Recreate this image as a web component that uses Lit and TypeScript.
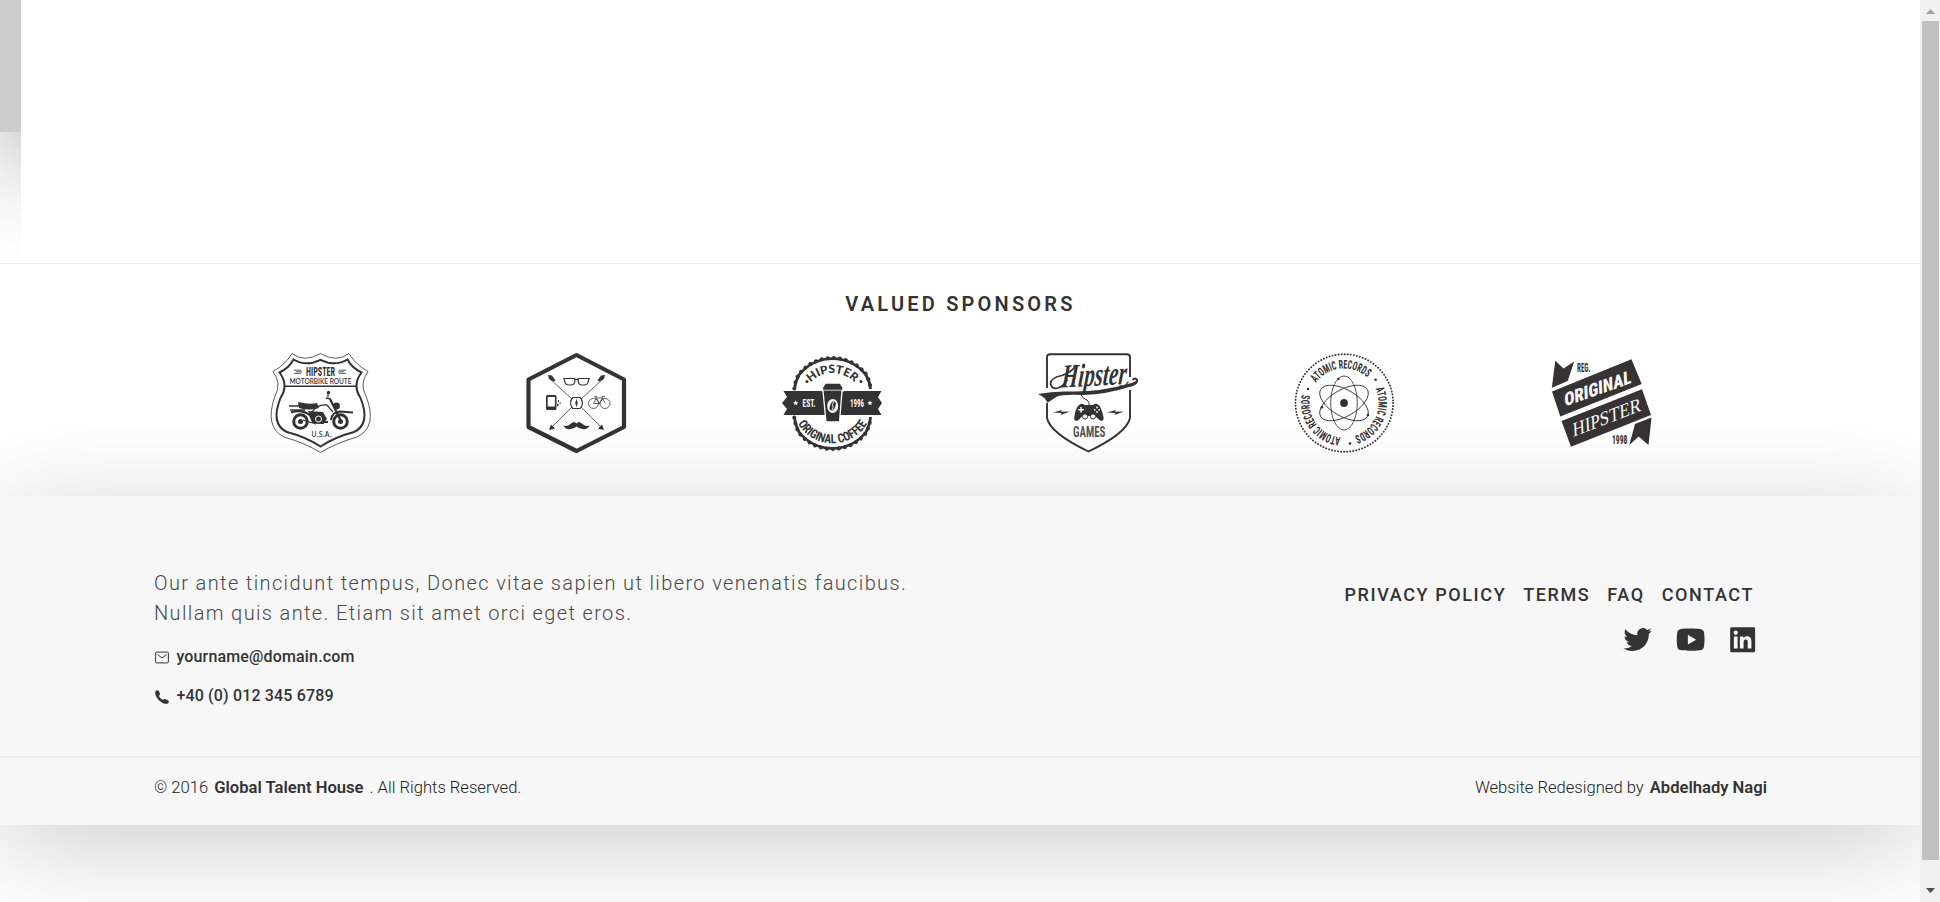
import { LitElement, html, css, svg } from "lit";
import { customElement } from "lit/decorators.js";

const INK = "#333333";

const motorbike = svg`
  <g fill="none" stroke=${INK}>
    <path stroke-width=".8" d="M22 .5Q34 10 50.500 .6Q67 10 79 .5Q86 12 98 18.500Q89 31 96 43Q108 74 87 84Q66 90 50.500 99.500Q35 90 14 84Q-6 74 5 43Q12 31 3 18.500Q15 12 22 .5Z"/>
    <path stroke-width="2" d="M23.500 6.500Q36 14 50.500 6.800Q65 14 77.500 6.500Q82 15 91.500 19.500Q82 32 90.500 45Q101 71 84 79Q65 84 50.500 93.500Q36 84 17 79Q0 71 10.500 45Q19 32 9.500 19.500Q19 15 23.500 6.500Z"/>
    <path stroke-width="1.600" d="M14.500 33.300H86.500"/>
    <path stroke-width=".8" d="M24 17.200h7M26 18.800h6M24 20.400h7M69 17.200h7M68 18.800h6M69 20.400h7"/>
    <circle cx="30.500" cy="68.500" r="6.800" stroke-width="3"/>
    <circle cx="70.500" cy="68.500" r="6.800" stroke-width="3"/>
    <path stroke-width="2.200" d="M21 59.500Q31 56 40 62L43 69H58M61 67Q62 59 70 58.500L83 59.500M60 46L71 68"/>
    <path stroke-width="1.300" d="M56 45l5 1M58 40v4M42 59Q47 51 57 52l6 7M19 53h10M20 57h15M46 70l8 0M33 67l13 4"/>
  </g>
  <g fill=${INK}>
    <path d="M28 49q12 3 19 1l2 5q-10 3-20 0zM38 58l15 1 4 7-4 5-9-1z"/>
    <circle cx="66.500" cy="53" r="3.400"/><circle cx="58.500" cy="39.500" r="1.700"/>
    <circle cx="30.500" cy="68.500" r="2.500"/><circle cx="70.500" cy="68.500" r="2.500"/>
  </g>
  <circle cx="48.500" cy="66" r="3" fill="none" stroke="#fff"/>
  <text class="cond" x="36" y="22.800" font-size="12.500" textLength="29" lengthAdjust="spacingAndGlyphs">HIPSTER</text>
  <text class="geo" x="19.500" y="30.600" font-size="7" textLength="62" lengthAdjust="spacingAndGlyphs">MOTORBIKE ROUTE</text>
  <text class="geo" x="41.500" y="83.600" font-size="6.800" textLength="20" lengthAdjust="spacing">U.S.A.</text>`;

const hexagon = svg`
  <path d="M50.500 2L98 26.500V74L50.500 98L2.500 74V26.500Z" fill="none" stroke=${INK} stroke-width="4.200" stroke-linejoin="round"/>
  <g fill="none" stroke=${INK} stroke-width=".75">
    <path d="M24 26L46 46M55 54L77 76M77 26L55 46M46 54L24 76"/>
    <path stroke-width="1.100" d="M47 44.500h7q2.500 2.500 2.500 5.500t-2.500 5.500h-7q-2.500-2.500-2.500-5.500t2.500-5.500z"/>
    <path stroke-width="1.200" d="M38 25.500h10.800v3q-.5 3.500-4 3.500h-2q-3.500 0-4-3.500zM63 25.500H52.200v3q.5 3.500 4 3.500h2q3.500 0 4-3.500zM48.800 26.500h3.500"/>
    <circle cx="67.500" cy="50.500" r="5"/><circle cx="79" cy="50.500" r="5"/>
    <path d="M67.500 50.500l3-5.500h6l-3 5.500zM79 50.500l-3-7h3M70.500 45l-1-1.500M68 43.700h3M70.500 45l3 5.500"/>
  </g>
  <path fill=${INK} d="M22 22l4 .5 3.500 5-1.500 1-5-2.500zM79 22l-4 .5-3.500 5 1.500 1 5-2.500zM23 77l2-5.500 4 4zM78 77l-2-5.500-4 4z"/>
  <path fill=${INK} d="M50.500 45.800l1.300 4.200-1.300 4.200-1.300-4.200z"/>
  <path fill=${INK} fill-rule="evenodd" d="M21.500 42h7.500q1.500 0 1.500 1.500v12q0 1.500-1.500 1.500h-7.500q-1.500 0-1.500-1.500v-12q0-1.500 1.500-1.500zM21.700 44v9.500h7.200V44z"/>
  <path fill=${INK} d="M32 47h1v2h-1zM31 51h1.600v2H31zM33.500 49.500h1.500v1h-1.500z"/>
  <path fill=${INK} d="M37.500 72.500Q42 74 45 70.500Q48.500 67.500 50.500 70.500Q52.500 67.500 56 70.500Q59 74 63.500 72.500Q61.500 77 56.500 76Q52 75 50.500 73.500Q49 75 44.500 76Q39.500 77 37.500 72.500Z"/>`;

const STAR = "M0-2.700L.8-.9L2.600-.8L1.200.4L1.600 2.200L0 1.200L-1.600 2.200L-1.200.4L-2.600-.8L-.8-.9Z";

const coffee = svg`
  <defs>
    <path id="ca" d="M20.500 50A30 30 0 0 1 80.500 50"/>
    <path id="cb" d="M10.200 50A40.300 40.300 0 0 0 90.800 50"/>
  </defs>
  <g fill="none" stroke=${INK}>
    <path stroke-width="2.800" d="M12.500 36Q13 29 17 22A42.500 42.500 0 0 1 84 22Q88 29 88.500 36M12.500 64Q13 71 17 79A42.500 42.500 0 0 0 84 79Q88 71 88.500 64"/>
    <path stroke-width="4" stroke-linecap="round" stroke-dasharray=".1 6" d="M12.300 35.500Q13 29 16.600 21.600A42.800 42.800 0 0 1 84.400 21.600Q88 29 88.700 35.500M12.300 64.500Q13 71 16.600 79.400A42.800 42.800 0 0 0 84.400 79.400Q88 71 88.700 64.500"/>
  </g>
  <path fill=${INK} d="M1.500 38H99.500L96 44L100 50L96 56L99.500 62H1.500L5 56L0 50L5 44Z"/>
  <path fill=${INK} stroke="#fcfcfc" stroke-width="1.300" d="M43.500 30H58L61 34.500V38H60L57.500 69H44L41 38H40.500V34.500Z"/>
  <path stroke="#fcfcfc" stroke-width=".8" d="M41 37.200H60.500"/>
  <ellipse cx="50.700" cy="53" rx="5.500" ry="7" fill="#fcfcfc"/>
  <ellipse cx="50.700" cy="53" rx="2.600" ry="4.900" fill=${INK} transform="rotate(22 50.700 53)"/>
  <path d="M51.800 48.500q-2 3.500-1 4.500t-1 4.500" fill="none" stroke="#fcfcfc" stroke-width=".9"/>
  <text class="cond light" x="20.500" y="53.500" font-size="10.500" textLength="13" lengthAdjust="spacingAndGlyphs">EST.</text>
  <text class="cond light" x="68" y="53.500" font-size="10.500" textLength="14" lengthAdjust="spacingAndGlyphs">1996</text>
  <path d=${STAR} fill="#fafafa" transform="translate(13.700 50)"/><path d=${STAR} fill="#fafafa" transform="translate(88 50)"/>
  <circle cx="25" cy="28.500" r="1.500" fill=${INK}/><circle cx="79" cy="28.500" r="1.500" fill=${INK}/>
  <text class="geo heavy" font-size="11.500"><textPath href="#ca" startOffset="50%" text-anchor="middle" textLength="49" lengthAdjust="spacingAndGlyphs">HIPSTER</textPath></text>
  <text class="cond" font-size="12.500"><textPath href="#cb" startOffset="50%" text-anchor="middle" textLength="83" lengthAdjust="spacingAndGlyphs">ORIGINAL COFFEE</textPath></text>`;

const games = svg`
  <g fill="none" stroke=${INK}>
    <path stroke-width="1.900" d="M9 35V4Q9 1.200 12 1.200H89Q92 1.200 92 4V24M9 50V65Q12 80 50.500 98.500Q89 80 92 65V37"/>
    <path stroke-width="1" d="M43 42Q45 46 49 47Q52 49 51 54"/>
    <path stroke-width="1.800" d="M90 32Q99 31 99 27Q97 24 94.500 27"/>
    <path stroke-width="1.700" stroke-linecap="round" d="M38 12.500Q34 19 24 22.500Q12 25 12.500 31Q14 36.500 20 35Q26 33 29 27"/>
    <path stroke-width="1.300" stroke-linecap="round" d="M82 33Q87 34 90 29"/>
  </g>
  <path fill=${INK} d="M0 41Q15 38 30 38.500Q60 39.500 92 30.500Q99 29 99.500 25Q102 32 91 34Q70 41 45 42Q25 41 19 43.500L9.500 49.800Q7 44 0 41Z"/>
  <text class="script" transform="translate(23 34.500) rotate(-3) skewX(-8)" font-size="33" textLength="65" lengthAdjust="spacingAndGlyphs">Hipster</text>
  <path fill=${INK} d="M42 51.500Q44 50 46.500 52H55Q57.500 50 60 51.500Q63 53 65.500 64Q66 69 62 67.500L57 63H44.500L40 67.500Q35 69 36.500 63Q38 53 42 51.500Z"/>
  <g fill="#fcfcfc"><circle cx="47" cy="63.500" r="2.600" stroke=${INK}/><circle cx="55" cy="63.500" r="2.600" stroke=${INK}/>
    <path d="M42.300 54h1.500v2h2v1.500h-2v2h-1.500v-2h-2V56h2z"/><circle cx="59" cy="54.500" r=".9"/><circle cx="59" cy="59" r=".9"/><circle cx="56.800" cy="56.800" r=".9"/><circle cx="61.200" cy="56.800" r=".9"/></g>
  <path fill=${INK} d="M15 59.500L24 57L23 58.700L32 58.500L22.500 62L23.500 60ZM69 59.500L78 57L77 58.700L86 58.500L76.500 62L77.500 60Z"/>
  <text class="cond" fill-opacity=".85" x="35" y="84" font-size="15.500" textLength="32.500" lengthAdjust="spacingAndGlyphs">GAMES</text>`;

const atomic = svg`
  <defs><path id="at" d="M50 84.500A34.500 34.500 0 0 1 50 15.500A34.500 34.500 0 0 1 50 84.500"/></defs>
  <circle cx="50.300" cy="50" r="48.800" fill="none" stroke=${INK} stroke-width="1.900" stroke-linecap="round" stroke-dasharray=".1 2.966"/>
  ${[-6, 114, 234].map(a => svg`<text class="cond" font-size="12" transform=${`rotate(${a} 50 50)`}><textPath href="#at" startOffset="50%" text-anchor="middle" textLength="58" lengthAdjust="spacingAndGlyphs">ATOMIC RECORDS</textPath></text>`)}
  <g fill=${INK}><circle cx="81.600" cy="26.700" r="1.300"/><circle cx="56" cy="90.500" r="1.300"/><circle cx="14" cy="36" r="1.300"/>
    <circle cx="50" cy="50" r="3.900"/><circle cx="44.300" cy="26" r="1.300"/><circle cx="28" cy="54.300" r="1.300"/><circle cx="74" cy="62" r="1.300"/></g>
  <g fill="none" stroke=${INK} stroke-width=".85">
    ${[0, 60, 120].map(a => svg`<ellipse cx="50" cy="50" rx="13.300" ry="27" transform=${`rotate(${a} 50 50)`}/>`)}
  </g>`;

const original = svg`
  <g fill="#373233">
    <path d="M1 38.500L80.500 6.300L90.700 31L9.300 63.500ZM10.500 68L91 36.300L100 62L20 93.800Z"/>
    <path d="M4.300 7.700L12.500 15.500L23.200 8.500L16.700 28L.8 34.700ZM100.500 64.500L97.500 92L87.600 83.600L78.300 92L84 71Z"/>
  </g>
  <text class="cond" x="26" y="19.300" font-size="12" textLength="13.500" lengthAdjust="spacingAndGlyphs">REG.</text>
  <text class="cond" x="61" y="90.500" font-size="13.500" textLength="15.500" lengthAdjust="spacingAndGlyphs">1998</text>
  <text class="cond light heavy" transform="matrix(.94 -.33 .05 1 13.700 53.500)" font-size="18.500" textLength="71" lengthAdjust="spacingAndGlyphs">ORIGINAL</text>
  <text class="serif light" transform="matrix(.935 -.36 .05 1 22 84)" font-size="20" textLength="73" lengthAdjust="spacingAndGlyphs">HIPSTER</text>`;

@customElement("sponsor-strip")
export class SponsorStrip extends LitElement {
  static styles = css`
    :host { display: block; height: 232px; border-top: 1px solid #eee; }
    .title { margin: 0; padding: 24px 0 0 1px; height: 64px; box-sizing: border-box; line-height: 32px; text-align: center; font-size: 20px; font-weight: 600; letter-spacing: 3.200px; color: #333; }
    .logos { width: 1537px; margin: 25px auto 0 192.200px; display: grid; grid-template-columns: repeat(6, 1fr); justify-items: center; }
    svg { width: 101px; height: 101px; overflow: visible; }
    text { fill: #333; font-family: "Liberation Sans", sans-serif; }
    .cond { font-family: "Roboto Condensed", "Liberation Sans Narrow", Roboto, sans-serif; font-weight: 700; }
    .geo { font-family: Lato, sans-serif; font-weight: 600; }
    .heavy { font-weight: 900; }
    .serif { font-family: "Liberation Serif", serif; }
    .script { font-family: "Liberation Serif", serif; font-style: italic; font-weight: 700; }
    .light { fill: #fafafa; }
  `;
  render() {
    return html`<h2 class="title">VALUED SPONSORS</h2>
      <div class="logos">${[motorbike, hexagon, coffee, games, atomic, original].map(
        l => html`<svg viewBox="0 0 101 101">${l}</svg>`)}</div>`;
  }
}

const twitter = "M22.162 5.656a8.384 8.384 0 0 1-2.402.658A4.196 4.196 0 0 0 21.600 4c-.82.488-1.719.83-2.656 1.015a4.182 4.182 0 0 0-7.126 3.814 11.874 11.874 0 0 1-8.620-4.370 4.168 4.168 0 0 0-.566 2.103c0 1.450.738 2.731 1.860 3.481a4.168 4.168 0 0 1-1.894-.523v.052a4.185 4.185 0 0 0 3.355 4.101 4.210 4.210 0 0 1-1.890.072A4.185 4.185 0 0 0 7.970 16.650a8.394 8.394 0 0 1-6.191 1.732 11.830 11.830 0 0 0 6.410 1.880c7.693 0 11.900-6.373 11.900-11.900 0-.18-.005-.362-.013-.54a8.496 8.496 0 0 0 2.087-2.165z";
const youtube = "M12.244 4c.534.003 1.870.016 3.290.073l.504.022c1.429.067 2.857.183 3.566.38.945.266 1.687 1.040 1.938 2.022.4 1.560.45 4.602.456 5.339v.326c-.006.737-.056 3.780-.456 5.339-.254.985-.997 1.760-1.938 2.022-.709.197-2.137.313-3.566.38l-.504.023c-1.420.056-2.756.07-3.290.072h-.49c-1.130-.007-5.856-.058-7.360-.476-.944-.266-1.687-1.040-1.938-2.022-.4-1.560-.45-4.602-.456-5.339v-.326c.006-.737.056-3.780.456-5.339.254-.985.997-1.760 1.939-2.021 1.503-.419 6.230-.47 7.360-.476zM9.999 8.500v7l6-3.500z";
const linkedin = "M4 3h16a1 1 0 0 1 1 1v16a1 1 0 0 1-1 1H4a1 1 0 0 1-1-1V4a1 1 0 0 1 1-1zM18.335 18.339V13.624c0-2.313-.5-4.091-3.200-4.091-1.300 0-2.170.713-2.528 1.387h-.035V9.750h-2.560v8.589h2.666v-4.250c0-1.121.212-2.205 1.601-2.205 1.370 0 1.390 1.282 1.390 2.278v4.177zM7.003 8.575a1.548 1.548 0 1 0 0-3.097 1.548 1.548 0 1 0 0 3.097zM8.340 18.339V9.750H5.666v8.589z";

@customElement("site-footer")
export class SiteFooter extends LitElement {
  static styles = css`
    :host { display: block; height: 329px; background: #f7f7f7; box-shadow: 0 20px 100px rgba(0,0,0,.2); position: relative; color: #333; }
    .main { display: flex; justify-content: space-between; height: 260px; padding: 72px 154px 0; box-sizing: border-box; }
    .intro { margin: 0; font-size: 20px; font-weight: 300; line-height: 30px; letter-spacing: 1.370px; color: #484848; }
    .contact { display: flex; align-items: center; gap: 7.400px; height: 39px; font-size: 16px; font-weight: 550; letter-spacing: .16px; }
    .contacts { margin: 9px 0 0 1px; }
    .contact svg { width: 14px; height: 14px; margin-top: 3px; }
    .side { padding: 14px 10px 0 0; display: flex; flex-direction: column; align-items: flex-end; }
    nav { display: flex; gap: 17px; font-size: 18px; font-weight: 500; letter-spacing: 1.600px; line-height: 26px; padding-right: 2px; }
    .social { display: flex; gap: 19.500px; margin-top: 14.500px; margin-right: -3.700px; }
    .social svg { width: 33.300px; height: 33.300px; }
    .legal { border-top: 2px solid #efefef; height: 69px; box-sizing: border-box; padding: 17px 153px 0 154px; display: flex; justify-content: space-between; font-size: 16.600px; font-weight: 300; line-height: 26px; color: #222; }
    b { font-weight: 650; margin: 0 2px; color: #333; }
    .last { margin-right: 0; }
    .legal span { white-space: pre; }
  `;
  render() {
    return html`
      <div class="main">
        <div>
          <p class="intro">Our ante tincidunt tempus, Donec vitae sapien ut libero venenatis faucibus.<br>Nullam quis ante. Etiam sit amet orci eget eros.</p>
          <div class="contacts">
            <div class="contact"><svg viewBox="0 0 14 14" fill="none" stroke="#333"><rect x=".6" y="1.100" width="12.800" height="10.800" rx="1"/><path d="M2.500 3.500L7 7l4.500-3.500"/></svg><span>yourname@domain.com</span></div>
            <div class="contact"><svg viewBox="0 0 14 14"><path fill="#333" d="M1.300 .6Q3 -.4 3.800 1L5 3.700Q5.300 4.600 3.900 5.900Q5 8.600 8 10Q9.300 8.500 10.200 8.900L13.200 10.400Q14.600 11.400 13.300 13Q11.800 14.500 8.500 13.400Q2.500 11 .4 4.600Q-.3 1.700 1.300 .6Z"/></svg><span>+40 (0) 012 345 6789</span></div>
          </div>
        </div>
        <div class="side">
          <nav><span>PRIVACY POLICY</span><span>TERMS</span><span>FAQ</span><span>CONTACT</span></nav>
          <div class="social">${[twitter, youtube, linkedin].map(d => html`<svg viewBox="0 0 24 24"><path fill="#333" fill-rule="evenodd" d=${d}/></svg>`)}</div>
        </div>
      </div>
      <div class="legal"><span>© 2016 <b>Global Talent House</b> . All Rights Reserved.</span><span>Website Redesigned by <b class="last">Abdelhady Nagi</b></span></div>`;
  }
}

@customElement("app-root")
export class AppRoot extends LitElement {
  static styles = css`
    :host { display: grid; grid-template-columns: 1920px 20px; height: 902px; overflow: hidden; background: #fff; font-family: Roboto, sans-serif; }
    .page { overflow: hidden; height: 902px; }
    .hero { height: 263px; display: flex; }
    .edge { width: 21px; height: 300px; overflow: hidden; flex: none; }
    .slab { width: 400px; height: 132px; background: #ccc; box-shadow: 0 25px 110px rgba(0,0,0,.34); }
    .bar { background: #f1f1f1; display: flex; flex-direction: column; align-items: center; height: 902px; }
    .bar svg { width: 20px; height: 21px; flex: none; }
    .thumb { width: 17px; height: 839px; background: #c1c1c1; margin-left: 1px; }
    .down { margin-top: 20px; }
  `;
  render() {
    return html`
      <div class="page">
        <div class="hero"><div class="edge"><div class="slab"></div></div></div>
        <sponsor-strip></sponsor-strip>
        <site-footer></site-footer>
      </div>
      <div class="bar">
        <svg viewBox="0 0 20 21"><path d="M6 14L10.500 9L15 14Z" fill="#a3a3a3"/></svg>
        <div class="thumb"></div>
        <svg class="down" viewBox="0 0 20 21"><path d="M6 8L10.500 13L15 8Z" fill="#505050"/></svg>
      </div>`;
  }
}
